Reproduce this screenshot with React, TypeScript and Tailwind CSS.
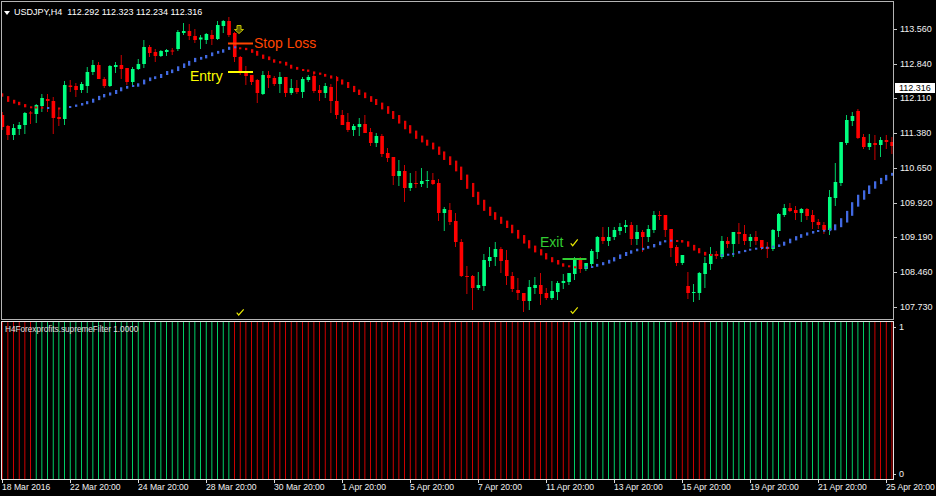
const font = { fontFamily: '"Liberation Sans", Arial, sans-serif' };

// [color, bodyTop, bodyBottom, wickTop, wickBottom], one per bar
const candles: [string, number, number, number, number][] = [
  ["r",115,127,112,130],["r",126,135,125,140],["g",128,135,124,140],["g",125,129,122,135],["g",113,125,112,134],["r",112.5,113.5,111,124],
  ["g",105,114,104,123],["g",98,106,94,112],["r",99,101,94,112],["r",101,118,97,134],["r",117,119,108,126],["g",85,119,81,125],
  ["r",85.5,87,80,92],["r",86,90,83,97],["g",84,90,82,93],["g",72,86,67,93],["g",65,72,60,75],["r",65,79,62,79],
  ["r",79,86,77,88],["g",66,86,65,87],["g",65,67,62,73],["r",65,69,55,79],["r",68,82,68,85],["g",69,82,67,85],
  ["g",64,69,59,70],["g",47,64,40,68],["r",47,53,45,57],["r",52,56,49,62],["g",51,56,50,57],["g",50,52,49,56],
  ["r",50.5,51.5,48,55],["g",32,49,30,51],["g",31,33,23,35],["r",31,36,24,40],["r",36,40,29,43],["g",37.5,39.5,35,49],
  ["g",34,40,33,44],["r",35,39,30,45],["g",25,39,21,40],["g",21,26,20,33],["r",21,35,17,37],["r",33,57,32,62],
  ["r",57,71,56,75],["r",73,76,66,85],["r",75,82,75,85],["r",80,93,79,103],["g",75,94,71,95],["r",75,78,71,88],
  ["r",78,84,76,86],["g",77,84,72,93],["r",77,93,77,97],["g",88,93,79,95],["r",88,92,80,94],["g",79,92,77,98],
  ["g",77,80,75,82],["r",76,91,74,93],["r",90,93,85,101],["g",86,93,83,98],["r",87,101,84,113],["r",101,115,76,119],
  ["r",115,125,110,125],["r",122,130,113,132],["g",126,130,124,136],["g",124,127,118,136],["r",124,133,115,133],["r",132,143,128,146],
  ["g",136,143,133,147],["r",136,154,134,157],["r",153,158,148,162],["r",157,176,157,185],["g",171,176,160,186],["r",171,188,165,202],
  ["g",183,188,173,191],["r",183,184,171,188],["g",181,184,168,187],["g",180,181,171,188],["r",180,184,173,185],["r",183,213,179,221],
  ["g",209,213,207,231],["r",210,222,203,225],["r",221,242,213,247],["r",242,276,239,277],["r",276,277,266,294],["r",276,288,275,310],
  ["g",285,288,272,290],["g",260,286,254,291],["g",257,261,247,267],["g",249,257,242,266],["r",249,261,247,273],["r",260,276,250,285],
  ["r",276,289,272,292],["r",290,293,278,300],["r",293,301,293,312],["g",287,301,280,310],["g",285,288,277,294],["r",285,294,273,305],
  ["r",293,298,288,300],["g",291,298,281,300],["g",283,292,281,300],["g",281,283,274,289],["g",273,282,273,285],["g",260,274,257,280],
  ["r",260,269,257,273],["g",263,269,263,271],["g",251,264,249,266],["g",237,252,236,259],["r",237,241,227,244],["g",237,241,227,246],
  ["g",230,237,227,240],["g",227,231,223,235],["g",225,227,220,233],["r",225,239,222,245],["g",232,239,225,245],["r",232,237,230,252],
  ["g",229,237,225,242],["g",215,230,211,233],["r",215,216,211,220],["r",215,230,215,237],["r",229,248,229,257],["r",247,263,245,266],
  ["g",255,263,255,265],["r",286,293,272,299],["g",292,293,284,302],["g",273,293,272,300],["g",263,274,257,288],["g",254,264,247,270],
  ["r",254,256,251,259],["g",241,257,236,259],["r",241,244,237,248],["g",232,244,232,257],["r",232,234,223,244],["r",234,241,225,245],
  ["g",237,241,234,247],["r",237,241,231,245],["r",240,248,240,250],["r",247,249,242,258],["g",230,249,229,251],["g",214,231,213,237],
  ["g",208,215,204,217],["r",208,211,203,212],["r",210,213,206,220],["g",209,213,208,222],["r",209,216,208,220],["r",215,222,210,229],
  ["r",222,225,219,229],["r",225,230,222,234],["g",197,230,190,235],["g",182,198,163,206],["g",142,183,142,186],["g",120,143,115,145],
  ["g",116,121,112,126],["r",111,138,109,139],["r",137,147,134,149],["g",143,147,134,150],["r",143,145,135,160],["g",140,145,137,157],
  ["r",140,142,135,149],["r",142,146,137,154],
];

// centre of the trend dot on each bar
const trend = [
  95,99,101.7,103.5,105.7,107.3,107.5,107.7,108,108.3,108.5,108,
  107,105.7,104.3,102.7,100.7,98,95.7,94,92,89.3,87.3,86,85,82,79.3,77.7,76,73,71.3,68.7,65.7,63.3,60,58.3,56.7,54.3,52.3,51,48.3,47.3,
  48.3,49,51,53.3,56.7,58.3,61,62.3,63.7,66.7,68.3,70,70.7,
  72.7,73.7,75.3,77,79,82,85,89,92.3,95.3,99,102,106,110,115,119.3,125,129.3,134.7,139,142.7,146,150.7,155.7,160.7,166,173.3,181.7,190,198.3,205.3,211.3,216,220.3,224.3,229,234.3,239.3,244.3,249,252.3,256.3,259.7,262.3,265,266.3,267.3,267.3,
  267.3,267,265.3,263.7,261.7,259.3,256.7,254,252,250,249,247.3,245.7,243.3,241.3,240.7,
  241,241.3,244,247.7,250.7,253.7,255,255,
  255.3,254.7,254,252.3,251,249.7,248.7,248,247.7,246.7,245.7,243.7,241,238.3,236,234,232.3,231,230.7,229.7,227.3,222.7,216.7,209,200.7,195,189.7,185,181,177.7,174.3,
];

const barX = (i: number) => 2.2 + 5.667 * i;
const isBlue = (i: number) => (i >= 8 && i !== 10 && i <= 41) || (i >= 103 && i <= 118) || i >= 127;
const isHiddenDot = (i: number) => i === 9 || i === 11;
const isGreenBar = (i: number) => (i >= 6 && i <= 40) || (i >= 101 && i <= 118) || (i >= 125 && i <= 153);

const prices = ["113.560", "112.840", "112.110", "111.380", "110.650", "109.920", "109.190", "108.460", "107.730"];
const times = [
  "18 Mar 2016", "22 Mar 20:00", "24 Mar 20:00", "28 Mar 20:00", "30 Mar 20:00", "1 Apr 20:00", "5 Apr 20:00",
  "7 Apr 20:00", "11 Apr 20:00", "13 Apr 20:00", "15 Apr 20:00", "19 Apr 20:00", "21 Apr 20:00", "25 Apr 20:00",
];

const PriceChart = () => (
  <svg className="block" width={891} height={317} viewBox="2 2 891 317">
    {candles.map(([c, bt, bb, wt, wb], i) => {
      const col = c === "g" ? "#00ff7f" : "#ff0000";
      return (
        <g key={i} fill={col}>
          <rect x={barX(i) - 0.4} y={wt} width={0.8} height={wb - wt} />
          <rect x={barX(i) - 1.6} y={bt} width={3.6} height={Math.max(bb - bt, 1)} />
        </g>
      );
    })}
    {trend.map((y, i) => {
      if (isHiddenDot(i)) return null;
      const prev = trend[i - 1] ?? y;
      const next = trend[i + 1] ?? y;
      const h = Math.max(2, Math.abs(next - prev) * 0.85);
      return <rect key={i} x={Math.round(barX(i) - 1)} y={y - h / 2} width={2.3} height={h} fill={isBlue(i) ? "#4169e1" : "#e60000"} />;
    })}
    {/* trade marks */}
    <rect x={228} y={42.5} width={25} height={2} fill="#ff4500" />
    <rect x={228} y={71} width={25} height={2} fill="#ffff00" />
    <rect x={562.5} y={258} width={24} height={2} fill="#32cd32" />
    <path d="M237 25.5h4v4h2.5l-4.5 4-4.5-4H237z" fill="#5a5a00" stroke="#c0c000" />
    <path d="M236.7 312.7l2 2.3 5-5.7" fill="none" stroke="#e6e600" strokeWidth={1.2} />
    <path d="M570.7 243.3l2 2.4 5-6.4" fill="none" stroke="#e6e600" strokeWidth={1.2} />
    <path d="M570.7 311l2 2.3 5-6" fill="none" stroke="#e6e600" strokeWidth={1.2} />
  </svg>
);

const FilterBars = () => (
  <svg className="block" width={891} height={157} viewBox="2 322 891 157">
    {candles.map((_, i) => (
      <rect key={i} x={barX(i) - 0.4} y={322} width={0.8} height={157} fill={isGreenBar(i) ? "#00ff7f" : "#ff0000"} />
    ))}
  </svg>
);

export default function App() {
  return (
    <div className="w-[936px] h-[496px] bg-black text-white overflow-hidden relative flex flex-col text-[9px] leading-none" style={font}>
      {/* main chart row */}
      <div className="flex h-[320px]">
        <div className="relative mt-px ml-px w-[893px] h-[319px] border border-[#b4b4b4]">
          <PriceChart />
          <div className="absolute left-[2px] top-[6px] flex items-center gap-[3px] text-white">
            <span className="w-0 h-0 border-l-[3.5px] border-r-[3.5px] border-t-[4px] border-l-transparent border-r-transparent border-t-white" />
            <span className="ml-[1px] whitespace-pre">USDJPY,H4  112.292 112.323 112.234 112.316</span>
          </div>
          <span className="absolute left-[252px] top-[34px] text-[14px] text-[#ff4500]">Stop Loss</span>
          <span className="absolute left-[188px] top-[67px] text-[14px] text-[#ffff00]">Entry</span>
          <span className="absolute left-[538px] top-[233px] text-[14px] text-[#32cd32]">Exit</span>
        </div>
        <div className="flex flex-col pt-[12px]">
          {prices.map((p) => (
            <div key={p} className="flex items-center h-[34.75px] shrink-0">
              <span className="w-[3px] h-px bg-[#c8c8c8]" />
              <span className="ml-[3px] text-[#f2f2f2]">{p}</span>
            </div>
          ))}
        </div>
        <div className="absolute left-[895px] top-[83px] w-[40px] h-[10px] bg-white text-black flex items-center pl-[4px]">112.316</div>
      </div>

      {/* filter row */}
      <div className="flex h-[160px]">
        <div className="relative mt-px ml-px w-[893px] h-[159px] border border-[#e6e6e6]">
          <FilterBars />
          <span className="absolute left-[3px] top-[4px] text-[8.2px] text-[#e0e0e0]">H4Forexprofits.supremeFilter 1.0000</span>
        </div>
        <div className="flex flex-col justify-between pt-[3px] pb-[1px] text-[#f2f2f2]">
          <div className="flex items-center">
            <span className="w-[2px] h-px bg-[#c8c8c8]" />
            <span className="ml-[3px]">1</span>
          </div>
          <div className="flex items-center">
            <span className="w-[2px] h-px bg-[#c8c8c8]" />
            <span className="ml-[3px]">0</span>
          </div>
        </div>
      </div>

      {/* time axis */}
      <div className="flex pl-[2px]">
        {times.map((t) => (
          <div key={t} className="w-[68px] shrink-0 flex flex-col">
            <span className="w-px h-[3px] bg-[#e0e0e0]" />
            <span className="whitespace-nowrap text-[8.6px] text-[#f2f2f2]">{t}</span>
          </div>
        ))}
      </div>
    </div>
  );
}
